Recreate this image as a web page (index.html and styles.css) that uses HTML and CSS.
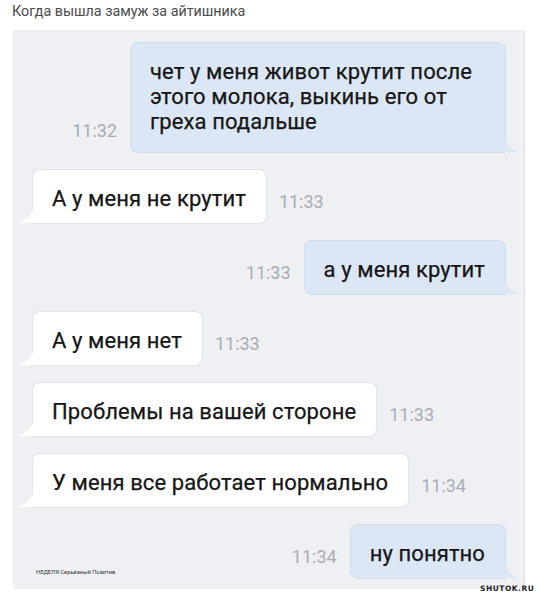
FILE: index.html
```html
<!DOCTYPE html>
<html lang="ru">
<head>
<meta charset="utf-8">
<title>Когда вышла замуж за айтишника</title>
<link rel="stylesheet" href="styles.css">
</head>
<body>
<div class="page">
  <div class="title">Когда вышла замуж за айтишника</div>
  <div class="chat">
    <div class="row out">
      <span class="time">11:32</span>
      <div class="bubble multi">чет у меня живот крутит после этого молока, выкинь его от греха подальше</div>
    </div>
    <div class="row in">
      <div class="bubble">А у меня не крутит</div>
      <span class="time">11:33</span>
    </div>
    <div class="row out">
      <span class="time">11:33</span>
      <div class="bubble">а у меня крутит</div>
    </div>
    <div class="row in">
      <div class="bubble">А у меня нет</div>
      <span class="time">11:33</span>
    </div>
    <div class="row in">
      <div class="bubble">Проблемы на вашей стороне</div>
      <span class="time">11:33</span>
    </div>
    <div class="row in">
      <div class="bubble">У меня все работает нормально</div>
      <span class="time">11:34</span>
    </div>
    <div class="row out">
      <span class="caption">НЕДЕЛЯ Серьезный Позитив</span>
      <span class="time">11:34</span>
      <div class="bubble">ну понятно</div>
    </div>
  </div>
  <div class="watermark">SHUTOK.RU</div>
</div>
</body>
</html>
```

FILE: styles.css
```css
* { box-sizing: border-box; }
html, body { margin: 0; padding: 0; background: #ffffff; }
body { font-family: Roboto, "Noto Sans", "Liberation Sans", sans-serif; color: #222; }

.page { position: relative; width: 543px; height: 600px; }

.title {
  height: 30px;
  padding: 3px 0 0 12px;
  font-size: 14.3px;
  line-height: 16px;
  color: #4b4b4b;
}

.chat {
  margin-left: 13px;
  width: 512px;
  height: 559px;
  background: #eef0f4;
  border-right: 1px solid #dcdfe4;
  padding: 13px 0 0 0;
  display: flex;
  flex-direction: column;
  gap: 18px;
}

.row { display: flex; align-items: flex-end; }
.row.out { justify-content: flex-end; padding-right: 19px; }
.row.in { justify-content: flex-start; padding-left: 20px; }

.bubble {
  position: relative;
  font-size: 22px;
  line-height: 25px;
  letter-spacing: 0.1px;
  padding: 16px 20px 12px 19px;
  border-radius: 7px;
  white-space: nowrap;
  color: #161616;
  -webkit-text-stroke: 0.25px #161616;
}
.bubble.multi { white-space: normal; width: 374px; padding-bottom: 18px; }

.out .bubble {
  background: #dce7f5;
  box-shadow: 0 0 0 1px #d2dcea;
  border-bottom-right-radius: 0;
}
.in .bubble {
  background: #ffffff;
  box-shadow: 0 0 0 1px #e2e5ea;
  border-bottom-left-radius: 0;
}

.out .bubble::after {
  content: "";
  position: absolute;
  right: -13px;
  bottom: 0;
  width: 14px;
  height: 16px;
  background: #dce7f5;
  clip-path: path('M0 0 Q 3 11 14 16 L 0 16 Z');
}
.in .bubble::after {
  content: "";
  position: absolute;
  left: -14px;
  bottom: 0;
  width: 15px;
  height: 16px;
  background: #ffffff;
  clip-path: path('M15 0 Q 12 11 0 16 L 15 16 Z');
}

.time {
  font-size: 18px;
  line-height: 20px;
  color: #a9adb3;
  padding-bottom: 11px;
}
.out .time { margin-right: 14px; }
.in .time { margin-left: 13px; }

.caption {
  margin-right: auto;
  margin-left: 23px;
  margin-bottom: 3px;
  font-size: 5.8px;
  line-height: 6px;
  color: #333;
  align-self: flex-end;
}

.watermark {
  position: absolute;
  left: 480px;
  top: 584px;
  font-family: "DejaVu Sans", "Liberation Sans", sans-serif;
  font-weight: bold;
  font-size: 7.5px;
  letter-spacing: 0.5px;
  color: #222;
}
```
